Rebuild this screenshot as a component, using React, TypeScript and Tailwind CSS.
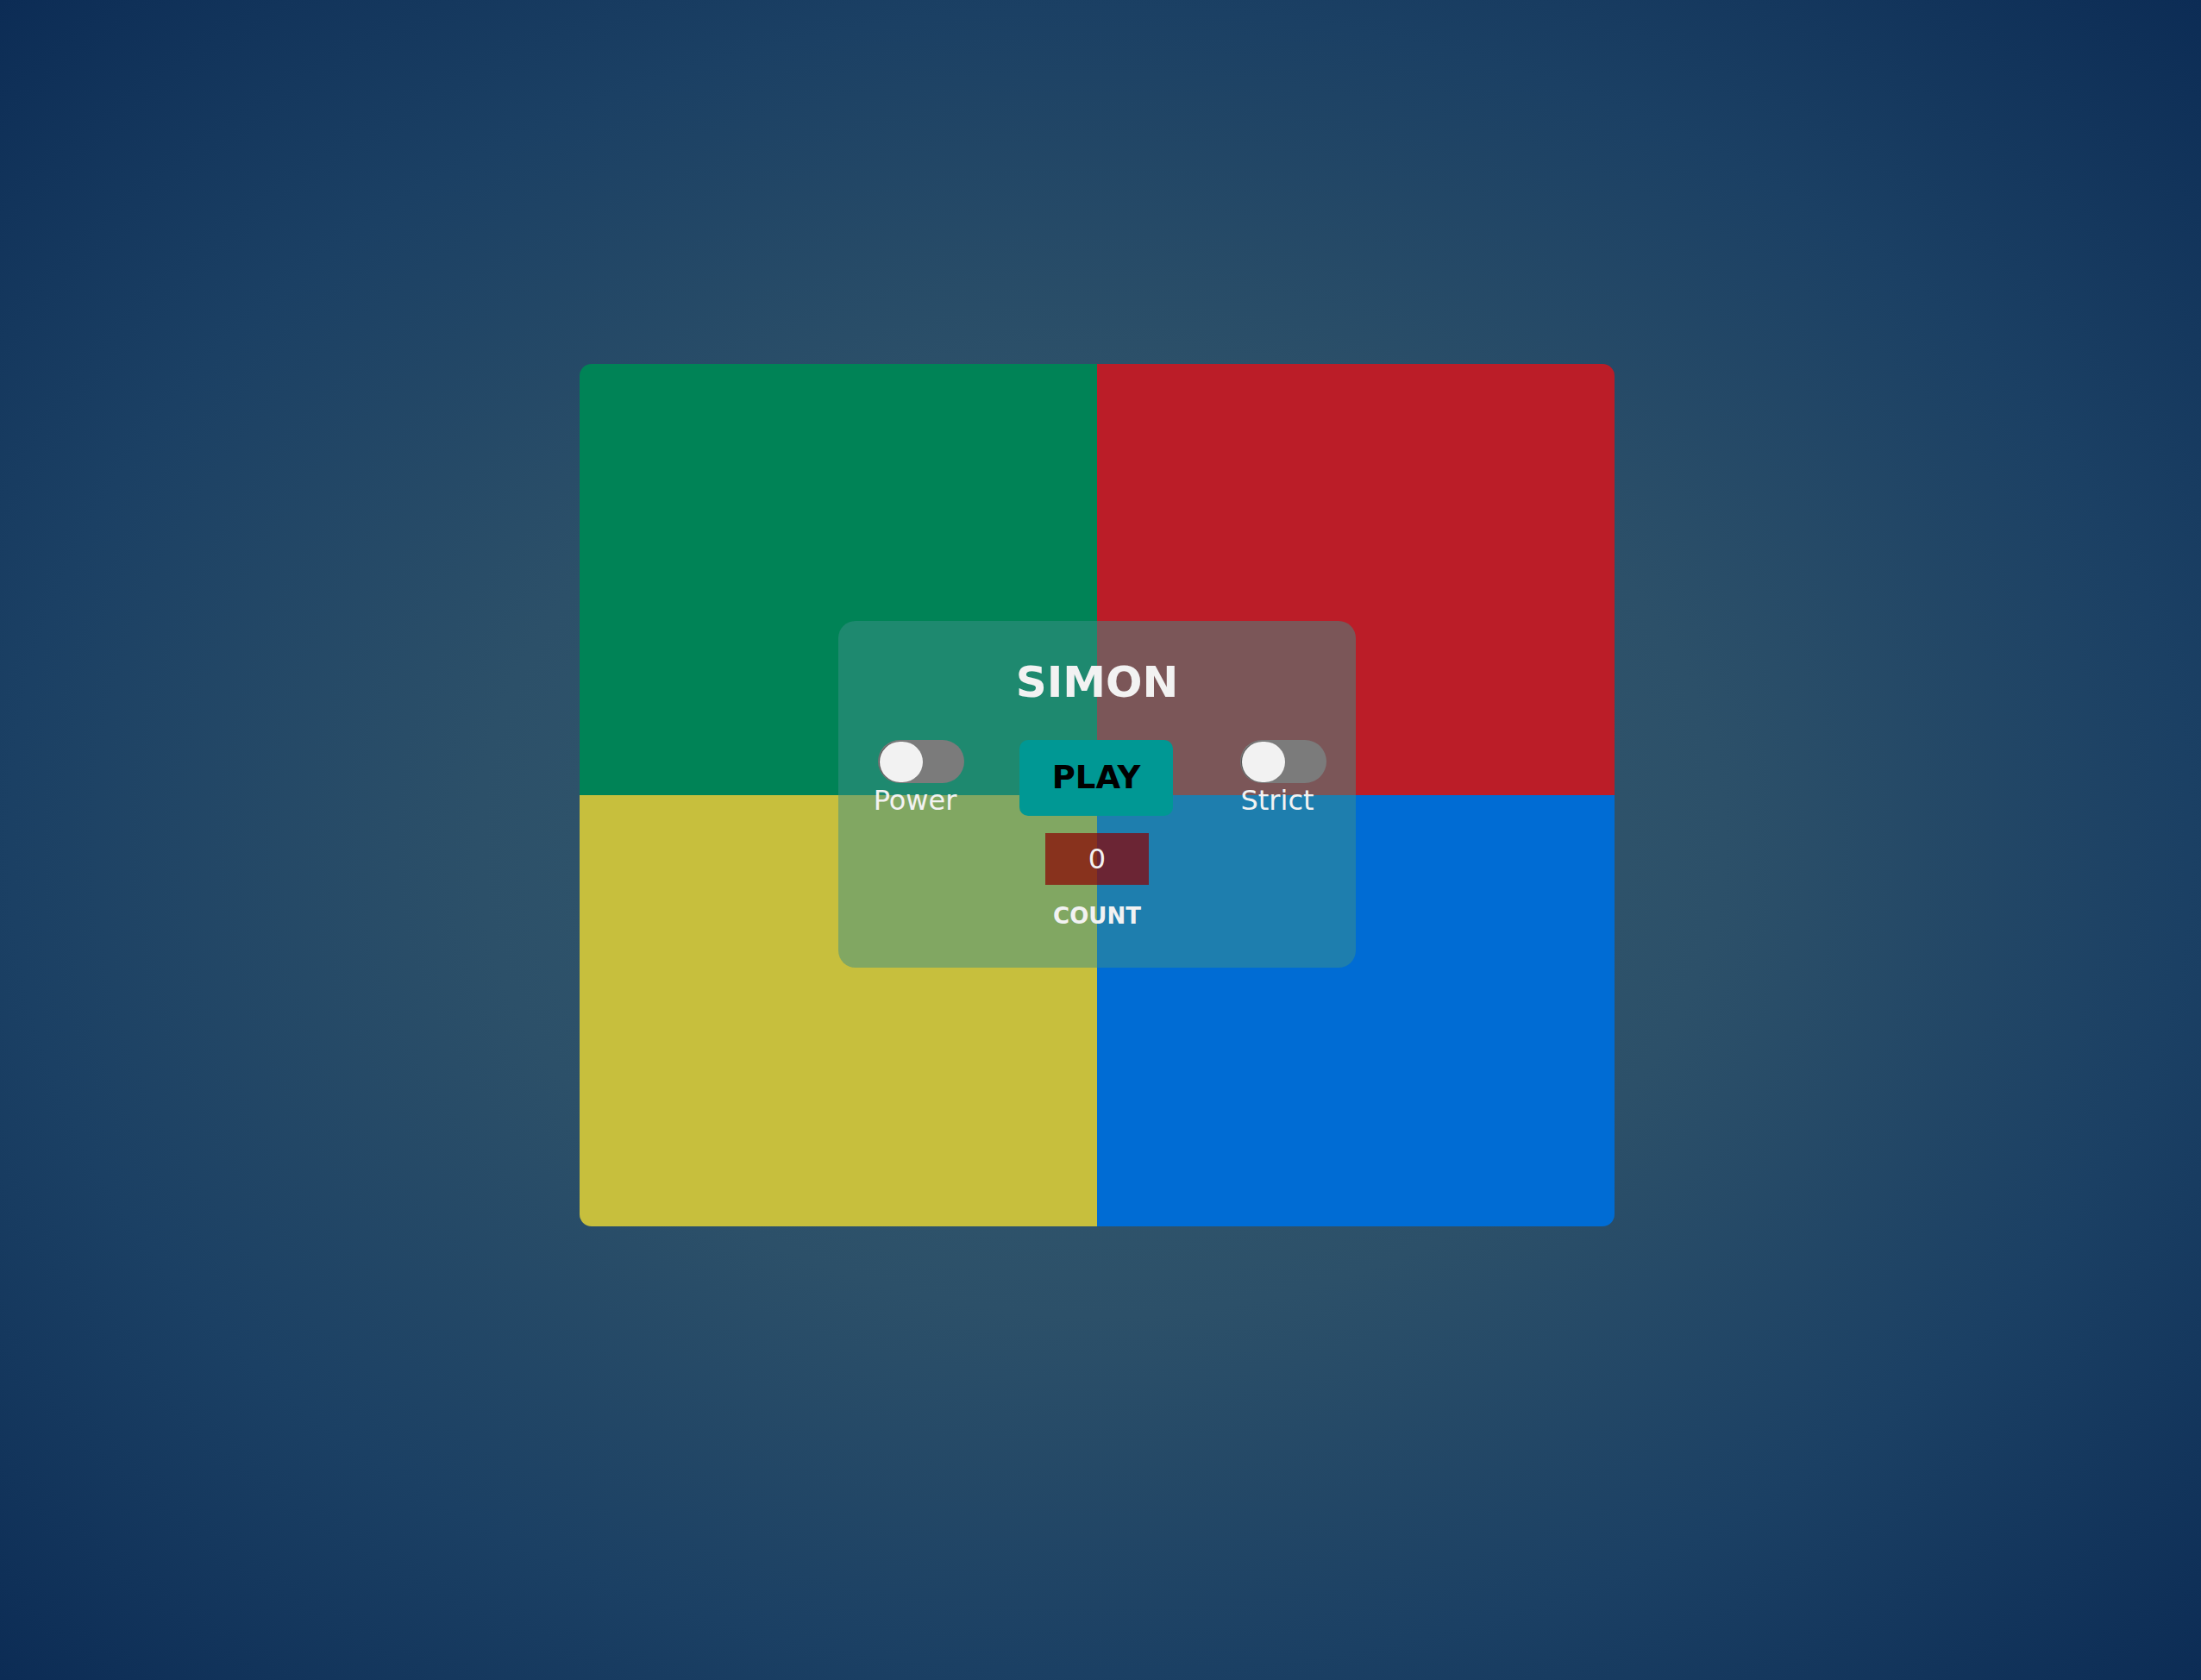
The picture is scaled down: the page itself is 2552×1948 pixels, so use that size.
import { useState } from "react";

function Toggle({ label, on, onToggle }: { label: string; on: boolean; onToggle: () => void }) {
  return (
    <div className="flex w-[100px] flex-col items-center">
      <button
        type="button"
        onClick={onToggle}
        className={`flex h-[50px] w-[100px] items-center rounded-full bg-[#7b7b7b] px-[2px] ${on ? "justify-end" : "justify-start"}`}
      >
        <span className="block h-[47px] w-[50px] rounded-full bg-[#f2f2f2] shadow-[-1px_0_1px_rgba(0,0,0,0.35)]" />
      </button>
      <span className="mr-[14px] mt-[2px] text-[32px] leading-[37px] text-[#f2f2f2]">{label}</span>
    </div>
  );
}

export default function App() {
  const [power, setPower] = useState(false);
  const [strict, setStrict] = useState(false);
  const [count] = useState(0);

  return (
    <div className="flex min-h-screen justify-center bg-[radial-gradient(ellipse_at_center,#375d6f_0%,#2c5069_40%,#1b4064_70%,#0c2c55_100%)] pt-[422px] font-['DejaVu_Sans',sans-serif]">
      <div className="relative mr-[8px] h-[1000px] w-[1200px]">
        <div className="grid h-full w-full grid-cols-2 grid-rows-2 overflow-hidden rounded-[14px]">
          <div className="bg-[#008356]" />
          <div className="bg-[#bb1d28]" />
          <div className="bg-[#c7bf3d]" />
          <div className="bg-[#006cd4]" />
        </div>

        {/* control panel sits over the four pads */}
        <div className="absolute left-[300px] top-[298px] flex h-[402px] w-[600px] flex-col items-center rounded-[20px] bg-[rgba(60,143,136,0.5)] pt-[42px]">
          <h1 className="text-[50px] font-bold leading-[58px] text-[#f2f2f2]">SIMON</h1>

          <div className="mt-[38px] flex w-full items-start pl-[46px]">
            <Toggle label="Power" on={power} onToggle={() => setPower(!power)} />
            <button
              type="button"
              className="ml-[64px] flex h-[88px] w-[178px] items-center justify-center rounded-[10px] bg-[#009894] text-[37px] font-bold text-black"
            >
              PLAY
            </button>
            <div className="ml-[78px]">
              <Toggle label="Strict" on={strict} onToggle={() => setStrict(!strict)} />
            </div>
          </div>

          <div className="mt-[19px] flex h-[60px] w-[120px] items-center justify-center bg-[rgba(139,0,0,0.7)] text-[32px] text-[#f2f2f2]">
            {count}
          </div>
          <div className="mt-[21px] text-[26px] font-bold leading-[30px] text-[#f2f2f2]">COUNT</div>
        </div>
      </div>
    </div>
  );
}
